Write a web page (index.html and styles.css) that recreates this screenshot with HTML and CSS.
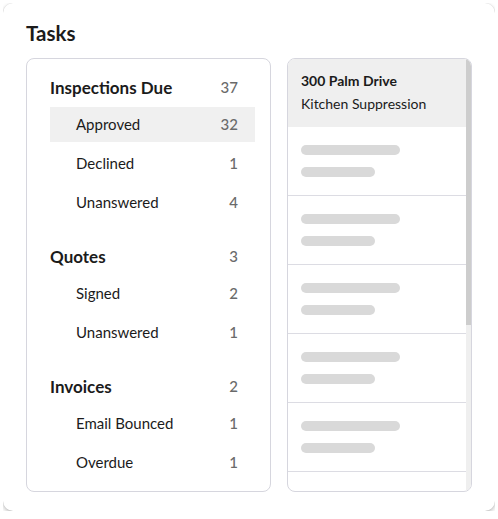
FILE: index.html
```html
<!DOCTYPE html>
<html>
<head>
<meta charset="utf-8">
<link rel="stylesheet" href="styles.css">
</head>
<body>
<div class="card">
  <h1 class="title">Tasks</h1>
  <div class="columns">
    <div class="panel list-panel">
      <div class="section">
        <div class="sec-head"><span>Inspections Due</span><span class="count">37</span></div>
        <div class="item active"><span>Approved</span><span class="count">32</span></div>
        <div class="item"><span>Declined</span><span class="count">1</span></div>
        <div class="item"><span>Unanswered</span><span class="count">4</span></div>
      </div>
      <div class="section">
        <div class="sec-head"><span>Quotes</span><span class="count">3</span></div>
        <div class="item"><span>Signed</span><span class="count">2</span></div>
        <div class="item"><span>Unanswered</span><span class="count">1</span></div>
      </div>
      <div class="section">
        <div class="sec-head"><span>Invoices</span><span class="count">2</span></div>
        <div class="item"><span>Email Bounced</span><span class="count">1</span></div>
        <div class="item"><span>Overdue</span><span class="count">1</span></div>
      </div>
    </div>
    <div class="panel detail-panel">
      <div class="detail-scroll">
        <div class="detail-head">
          <div class="addr">300 Palm Drive</div>
          <div class="kind">Kitchen Suppression</div>
        </div>
        <div class="sk-row"><div class="bar long"></div><div class="bar short"></div></div>
        <div class="sk-row"><div class="bar long"></div><div class="bar short"></div></div>
        <div class="sk-row"><div class="bar long"></div><div class="bar short"></div></div>
        <div class="sk-row"><div class="bar long"></div><div class="bar short"></div></div>
        <div class="sk-row"><div class="bar long"></div><div class="bar short"></div></div>
      </div>
      <div class="scroll-track"><div class="scroll-thumb"></div></div>
    </div>
  </div>
</div>
</body>
</html>
```
FILE: styles.css
```css
* { box-sizing: border-box; }
html, body { background: #ffffff; }
body {
  margin: 3px;
  font-family: Lato, "Liberation Sans", sans-serif;
  color: #1b1b1b;
}
.card {
  width: 492px;
  height: 508px;
  background: #fff;
  border-radius: 10px;
  box-shadow: 0 2px 4px rgba(0,0,0,0.25), 0 0 1px rgba(0,0,0,0.18);
  padding: 18px 23px 19px;
}
.title {
  margin: 0 0 13px;
  font-size: 20.5px;
  line-height: 24px;
  font-weight: 700;
}
.columns {
  display: grid;
  grid-template-columns: 245px 185px;
  gap: 16px;
  height: 434px;
}
.panel {
  border: 1px solid #d6d6de;
  border-radius: 8px;
  height: 434px;
}
.list-panel {
  padding: 16px 15px 11px 23px;
  display: flex;
  flex-direction: column;
  gap: 24px;
}
.section {
  display: flex;
  flex-direction: column;
  gap: 4px;
}
.sec-head {
  display: flex;
  justify-content: space-between;
  align-items: center;
  height: 24px;
  margin-bottom: 4px;
  padding-right: 17px;
  font-size: 17px;
  font-weight: 700;
}
.item {
  display: flex;
  justify-content: space-between;
  align-items: center;
  height: 35px;
  padding: 0 17px 1px 26px;
  font-size: 15px;
}
.item.active { background: #f0f0f0; }
.count {
  color: #6a6a6a;
  font-weight: 500;
  font-size: 15px;
}
.detail-panel {
  display: flex;
  overflow: hidden;
}
.detail-scroll {
  flex: 1;
  overflow: hidden;
}
.scroll-track {
  width: 5px;
  background: #efefef;
  flex-shrink: 0;
}
.scroll-thumb {
  height: 266px;
  background: #cdcdcd;
}
.detail-head {
  background: #efefef;
  height: 68px;
  padding: 10px 13px 10px;
  font-size: 14px;
  line-height: 23px;
}
.addr { font-weight: 700; font-size: 14px; }
.sk-row {
  height: 69px;
  border-bottom: 1px solid #dcdce3;
  padding: 18px 13px;
  display: flex;
  flex-direction: column;
  gap: 12px;
}
.bar {
  height: 10px;
  border-radius: 5px;
  background: #d9d9d9;
}
.bar.long { width: 99px; }
.bar.short { width: 74px; }
```
